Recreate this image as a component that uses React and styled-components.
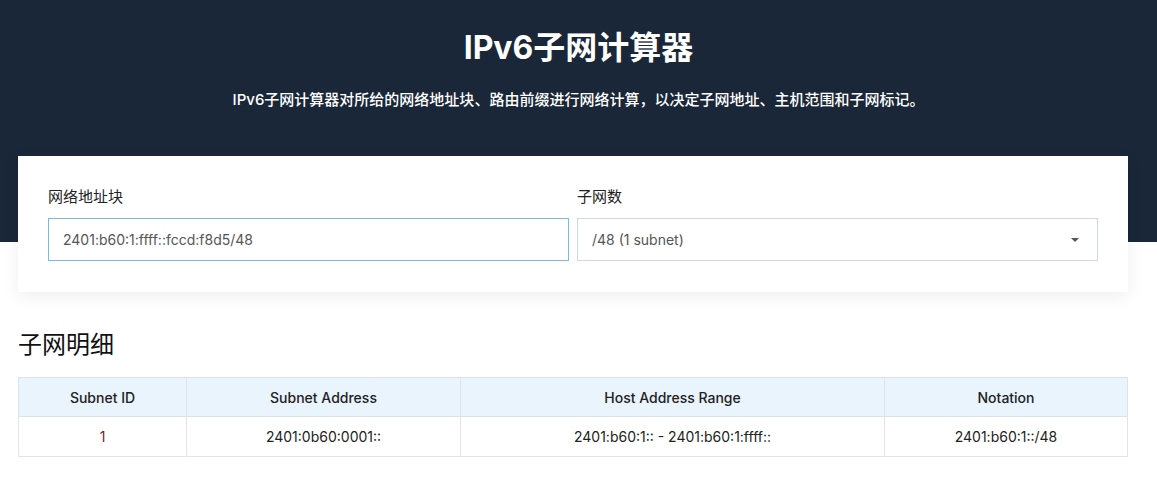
import React from 'react';
import styled, { createGlobalStyle } from 'styled-components';

const GlobalStyle = createGlobalStyle`
  html, body {
    margin: 0;
    padding: 0;
    background: #ffffff;
    font-family: Inter, "Noto Sans CJK SC", sans-serif;
    color: #222;
  }
  * { box-sizing: border-box; }
`;

const rows = [
  { id: 1, address: '2401:0b60:0001::', range: '2401:b60:1:: - 2401:b60:1:ffff::', notation: '2401:b60:1::/48' },
];

const App = () => {
  return (
    <Page>
      <GlobalStyle />
      <Hero>
        <Title>IPv6子网计算器</Title>
        <Subtitle>IPv6子网计算器对所给的网络地址块、路由前缀进行网络计算，以决定子网地址、主机范围和子网标记。</Subtitle>
      </Hero>
      <Main>
        <Card>
          <Field>
            <Label>网络地址块</Label>
            <Input defaultValue="2401:b60:1:ffff::fccd:f8d5/48" focused />
          </Field>
          <Field>
            <Label>子网数</Label>
            <Select>
              <span>/48 (1 subnet)</span>
              <Caret />
            </Select>
          </Field>
        </Card>
        <SectionTitle>子网明细</SectionTitle>
        <Table>
          <colgroup>
            <col style={{ width: 168 }} />
            <col style={{ width: 274 }} />
            <col style={{ width: 424 }} />
            <col />
          </colgroup>
          <thead>
            <tr>
              <Th>Subnet ID</Th>
              <Th>Subnet Address</Th>
              <Th>Host Address Range</Th>
              <Th>Notation</Th>
            </tr>
          </thead>
          <tbody>
            {rows.map(r => (
              <tr key={r.id}>
                <Td accent>{r.id}</Td>
                <Td>{r.address}</Td>
                <Td>{r.range}</Td>
                <Td>{r.notation}</Td>
              </tr>
            ))}
          </tbody>
        </Table>
      </Main>
    </Page>
  );
};

const Page = styled.div`
  position: relative;
`;

const Hero = styled.header`
  background: #1a2738;
  height: 242px;
  padding-top: 27px;
  text-align: center;
  color: #fff;
`;

const Title = styled.h1`
  margin: 0;
  font-size: 32px;
  line-height: 42px;
  font-weight: 700;
`;

const Subtitle = styled.p`
  margin: 21px 0 0;
  font-size: 15px;
  line-height: 20px;
  font-weight: 500;
`;

const Main = styled.main`
  margin-top: -86px;
  padding: 0 29px 0 18px;
`;

const Card = styled.section`
  background: #fff;
  box-shadow: 0 4px 16px rgba(0, 0, 0, 0.07);
  padding: 31px 30px 31px;
  display: grid;
  grid-template-columns: 1fr 1fr;
  gap: 8px;
`;

const Field = styled.div`
  display: flex;
  flex-direction: column;
`;

const Label = styled.label`
  font-size: 15px;
  line-height: 20px;
  color: #222;
  margin-bottom: 11px;
`;

const Input = styled.input.withConfig({ shouldForwardProp: p => p !== 'focused' })`
  height: 43px;
  border: 1px solid ${p => (p.focused ? '#7ab8f0' : '#cfd8e3')};
  padding: 0 14px;
  font-family: inherit;
  font-size: 14px;
  color: #555;
  outline: none;
`;

const Select = styled.div`
  height: 43px;
  border: 1px solid #cfd8e3;
  padding: 0 14px;
  display: flex;
  align-items: center;
  justify-content: space-between;
  font-size: 14px;
  color: #555;
`;

const Caret = styled.span`
  width: 0;
  height: 0;
  border-left: 4px solid transparent;
  border-right: 4px solid transparent;
  border-top: 4px solid #555;
  margin-right: 4px;
`;

const SectionTitle = styled.h2`
  margin: 36px 0 15px;
  font-size: 24px;
  line-height: 34px;
  font-weight: 400;
  color: #111;
`;

const Table = styled.table`
  width: 100%;
  border-collapse: collapse;
  table-layout: fixed;
  font-size: 14px;
  text-align: center;
`;

const Th = styled.th`
  background: #e9f4fd;
  border: 1px solid #dde3ea;
  height: 39px;
  font-weight: 500;
  color: #222;
`;

const Td = styled.td.withConfig({ shouldForwardProp: p => p !== 'accent' })`
  border: 1px solid #e1e4e8;
  height: 40px;
  color: ${p => (p.accent ? '#7a1f2b' : '#222')};
`;

export default App;
